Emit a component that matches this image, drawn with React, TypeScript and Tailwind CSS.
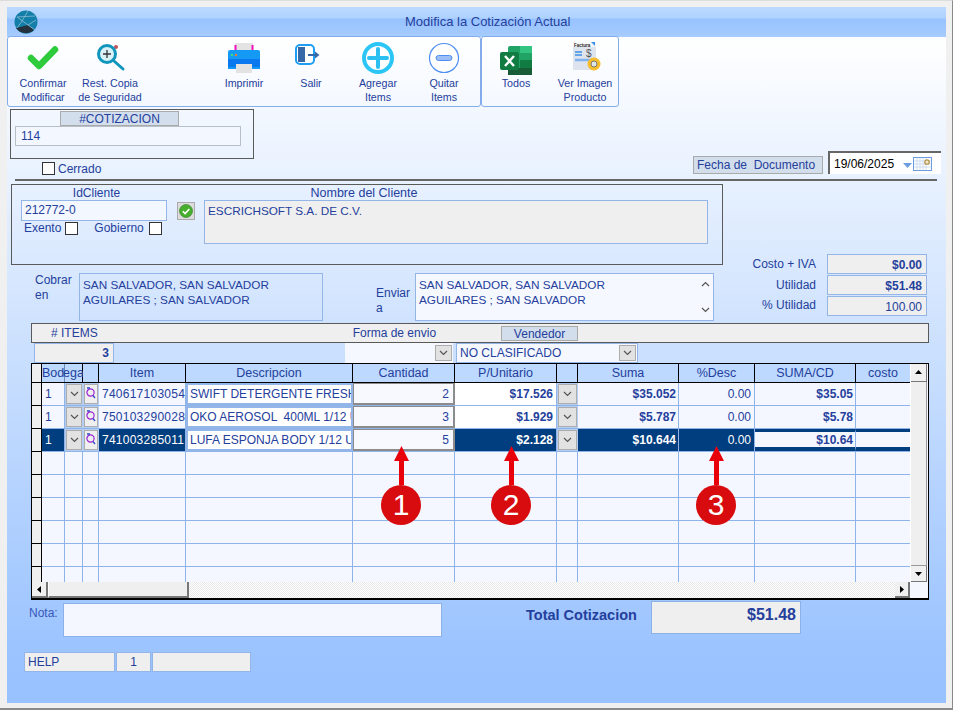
import React from 'react';

const ink = 'text-[#24409c]';

const CheckIcon = () => (
  <svg width="36" height="30" viewBox="0 0 36 30">
    <path d="M6 15l8 8L30 6.5" fill="none" stroke="#2ecb3c" strokeWidth="6.5" strokeLinecap="round" strokeLinejoin="round" />
  </svg>
);

const ZoomIcon = () => (
  <svg width="32" height="30" viewBox="0 0 32 30">
    <circle cx="22" cy="4" r="2" fill="#c0505a" />
    <circle cx="13" cy="11" r="8.5" fill="#d8f2f8" stroke="#1095bd" strokeWidth="3" />
    <path d="M9 11h8M13 7v8" stroke="#333" strokeWidth="1.3" />
    <path d="M20 18l9 8" stroke="#1095bd" strokeWidth="3" strokeLinecap="round" />
  </svg>
);

const PrinterIcon = () => (
  <svg width="34" height="32" viewBox="0 0 34 32">
    <rect x="8" y="1" width="18" height="10" fill="#e3e3e3" />
    <path d="M8.5 3v6M25.5 3v6" stroke="#f010c0" strokeWidth="2" />
    <path d="M1 10a2 2 0 012-2h28a2 2 0 012 2v17H1z" fill="#1499f5" />
    <rect x="1" y="17" width="32" height="8" fill="#0a78ee" />
    <circle cx="5" cy="13" r="1.2" fill="#3ddc84" />
    <circle cx="9" cy="13" r="1.2" fill="#f47a30" />
    <rect x="9" y="22" width="16" height="9" fill="#e3e3e3" />
  </svg>
);

const ExitIcon = () => (
  <svg width="26" height="24" viewBox="0 0 26 24" className="-ml-[6px] -mt-[6px]">
    <rect x="1" y="2" width="18" height="19" rx="4" fill="#fff" stroke="#1e9df5" strokeWidth="2" />
    <path d="M3 4h7v15H3z" fill="#3668a8" />
    <path d="M13 12h9" stroke="#3668a8" strokeWidth="2" />
    <path d="M20 8.5l4.5 3.5-4.5 3.5z" fill="#3668a8" />
  </svg>
);

const PlusIcon = () => (
  <svg width="34" height="34" viewBox="0 0 34 34">
    <circle cx="17" cy="17" r="14" fill="#fff" stroke="#2cc6f6" strokeWidth="4" />
    <path d="M8 17h18M17 8v18" stroke="#2cc0f2" strokeWidth="4" strokeLinecap="round" />
  </svg>
);

const MinusIcon = () => (
  <svg width="32" height="32" viewBox="0 0 32 32">
    <circle cx="16" cy="16" r="14.5" fill="#fff" stroke="#4c8ff0" strokeWidth="1.2" />
    <rect x="8" y="13.5" width="16" height="5" rx="2.5" fill="#9dbdf6" stroke="#4c8ff0" />
  </svg>
);

const ExcelIcon = () => (
  <svg width="32" height="30" viewBox="0 0 32 30" className="mt-[6px]">
    <rect x="8" y="0" width="24" height="29" rx="2" fill="#21a366" />
    <rect x="20" y="0" width="12" height="7" fill="#33c481" />
    <rect x="20" y="14" width="12" height="8" fill="#107c41" />
    <rect x="8" y="22" width="24" height="7" fill="#185c37" />
    <rect x="0" y="6" width="19" height="18" rx="2" fill="#107c41" />
    <path d="M5 10l9 10M14 10l-9 10" stroke="#fff" strokeWidth="2.4" />
  </svg>
);

const InvoiceIcon = () => (
  <svg width="28" height="31" viewBox="0 0 28 31" className="ml-[3px]">
    <rect x="0" y="0" width="23" height="28" fill="#dde4ee" />
    <rect x="0" y="0" width="23" height="5" fill="#f8f8f8" />
    <text x="1" y="4.5" fontSize="4.5" fontWeight="700" fill="#222" fontFamily="Liberation Sans, sans-serif">Factura</text>
    <path d="M18 0h4v4z" fill="#3a90e8" />
    <path d="M2 10h7M2 13h7" stroke="#3a90e8" strokeWidth="1.4" />
    <text x="13" y="15" fontSize="10" fill="#555" fontFamily="Liberation Sans, sans-serif">$</text>
    <path d="M2 18h17" stroke="#7fb2ee" strokeWidth="2.5" />
    <circle cx="21" cy="22" r="6.5" fill="#f7bd2c" />
    <circle cx="21" cy="22" r="3" fill="#dfe5ea" stroke="#7c7c6c" />
  </svg>
);

const Logo = () => (
  <svg width="24" height="24" viewBox="0 0 24 24">
    <circle cx="12" cy="12" r="11.5" fill="#137fa8" />
    <path d="M2 18a12 12 0 0018 2l-6-5z" fill="#243240" />
    <path d="M3 7l11 8 7 5M14 1L8 11l-5 7M3 7l18-1M14 15l8-5" stroke="#9cc4d8" strokeWidth=".7" fill="none" />
  </svg>
);

const CalendarIcon = () => (
  <svg width="30" height="15" viewBox="0 0 30 15">
    <path d="M1 7h9l-4.5 5z" fill="#6c9de0" />
    <rect x="11.5" y="1.5" width="18" height="13" fill="#fff" stroke="#6c9de0" />
    <path d="M12 5h17M12 8h17M12 11h17M15 2v12M18 2v12M21 2v12M24 2v12" stroke="#c5d6ee" strokeWidth=".8" />
    <circle cx="25" cy="6" r="2.2" fill="#f2ead0" stroke="#b3954a" strokeWidth="1.3" />
  </svg>
);

const ToolButton = ({ icon, lines, className }: { icon: React.ReactNode; lines: string[]; className: string }) => (
  <button className={`flex flex-col items-center w-[66px] shrink-0 ${className}`}>
    <span className="h-[37px] mt-px flex items-center justify-center">{icon}</span>
    {lines.map((line) => (
      <span key={line} className="text-[10.7px] leading-[14px] whitespace-nowrap">{line}</span>
    ))}
  </button>
);

const Checkbox = ({ className = '' }: { className?: string }) => (
  <span className={`block w-[13px] h-[13px] bg-white border border-[#333] ${className}`} />
);

const Chevron = ({ up = false }: { up?: boolean }) => (
  <svg width="9" height="6" viewBox="0 0 9 6" className={up ? 'rotate-180' : ''}>
    <path d="M1 1l3.5 3.5L8 1" fill="none" stroke="#555" strokeWidth="1.2" />
  </svg>
);

const ComboButton = ({ className = '' }: { className?: string }) => (
  <span className={`flex items-center justify-center bg-[#e2e2e2] border border-[#adadad] ${className}`}>
    <Chevron />
  </span>
);

const LookupIcon = () => (
  <svg width="10" height="14" viewBox="0 0 10 14">
    <circle cx="4.5" cy="5.5" r="3.6" fill="none" stroke="#9a22d8" strokeWidth="1.2" />
    <path d="M7 8.5l2 2.5M1 1h3" stroke="#3448c8" strokeWidth="1.3" />
  </svg>
);

const Triangle = ({ d }: { d: string }) => (
  <svg width="9" height="9" viewBox="0 0 9 9"><path d={d} fill="#000" /></svg>
);

const Stat = ({ label, value, bold = false, labelClass = '' }: { label: string; value: string; bold?: boolean; labelClass?: string }) => (
  <div className="flex items-center h-[20px] mb-px">
    <span className={`w-[61px] text-[12px] whitespace-nowrap flex justify-end ${labelClass}`}>{label}</span>
    <span className={`ml-[11px] w-[100px] h-[20px] bg-[#efefef] border border-[#93b5e8] text-right pr-[4px] text-[12px] leading-[20px] ${bold ? 'font-bold' : ''}`}>{value}</span>
  </div>
);

const columns = [
  { name: 'Bod', w: 'w-[23px]' },
  { name: 'ega', w: 'w-[18px]' },
  { name: '', w: 'w-[16px]' },
  { name: 'Item', w: 'w-[87px]' },
  { name: 'Descripcion', w: 'w-[167px]' },
  { name: 'Cantidad', w: 'w-[102px]' },
  { name: 'P/Unitario', w: 'w-[102px]' },
  { name: '', w: 'w-[21px]' },
  { name: 'Suma', w: 'w-[101px]' },
  { name: '%Desc', w: 'w-[76px]' },
  { name: 'SUMA/CD', w: 'w-[101px]' },
  { name: 'costo', w: 'w-[54px]' },
];

const items = [
  { code: '740617103054', desc: 'SWIFT DETERGENTE FRESH', qty: '2', price: '$17.526', sum: '$35.052', total: '$35.05' },
  { code: '750103290028', desc: 'OKO AEROSOL  400ML 1/12 U', qty: '3', price: '$1.929', sum: '$5.787', total: '$5.78' },
  { code: '741003285011', desc: 'LUFA ESPONJA BODY 1/12 UN', qty: '5', price: '$2.128', sum: '$10.644', total: '$10.64' },
];

const cell = 'h-full shrink-0 overflow-hidden whitespace-pre text-[12px]';
const line = 'border-r border-[#8fb4ea]';

const ItemRow = ({ item, selected }: { item: (typeof items)[number]; selected: boolean }) => {
  const pick = selected ? 'bg-[#003e80] text-white' : '';
  const band = selected ? 'border-t-[3px] border-b-[4px] border-t-[#003e80] border-b-[#003e80] leading-[16px]' : 'leading-[22px]';
  return (
    <div className="flex h-[23px] border-b border-[#8fb4ea]">
      <div className="w-[10px] shrink-0 bg-[#efefef] border-r border-b border-black -mb-px" />
      <div className={`${cell} ${line} leading-[22px] w-[23px] pl-[3px] ${pick}`}>1</div>
      <div className={`${cell} w-[18px] bg-[#b4cdf0] p-px`}><ComboButton className="w-full h-full" /></div>
      <div className={`${cell} w-[16px] bg-[#b4cdf0] p-px`}>
        <span className="flex items-center justify-center w-full h-full bg-[#efefef] border border-[#adadad]"><LookupIcon /></span>
      </div>
      <div className={`${cell} ${line} leading-[22px] tracking-[0.25px] w-[87px] pl-[3px] ${pick}`}>{item.code}</div>
      <div className={`${cell} w-[167px] bg-white border-2 border-[#93b5e8] pl-[2px] leading-[18px] text-[11.75px]`}>{item.desc}</div>
      <div className={`${cell} w-[102px] bg-[#f7f9ff] border border-b-2 border-r-2 border-[#8c8c8c] text-right pr-[4px] leading-[21px]`}>{item.qty}</div>
      <div className={`${cell} ${line} leading-[22px] w-[102px] text-right pr-[3px] font-bold ${selected ? pick : 'bg-white'}`}>{item.price}</div>
      <div className={`${cell} w-[21px] bg-[#b4cdf0] p-px`}><ComboButton className="w-full h-full" /></div>
      <div className={`${cell} ${line} leading-[22px] w-[101px] text-right pr-[2px] font-bold ${pick}`}>{item.sum}</div>
      <div className={`${cell} ${line} leading-[22px] w-[76px] text-right pr-[3px] ${pick}`}>0.00</div>
      <div className={`${cell} ${line} w-[101px] text-right pr-[2px] font-bold ${band}`}>{item.total}</div>
      <div className={`${cell} w-[54px] ${band}`} />
    </div>
  );
};

const EmptyRow = () => (
  <div className="flex h-[23px] border-b border-[#8fb4ea]">
    <div className="w-[10px] shrink-0 bg-[#efefef] border-r border-b border-black -mb-px" />
    {columns.map((col, i) => (
      <div key={i} className={`${col.w} h-full shrink-0 ${i === columns.length - 1 ? '' : 'border-r border-[#8fb4ea]'}`} />
    ))}
  </div>
);

const Callout = ({ n, className }: { n: string; className: string }) => (
  <div className={`absolute top-[445px] w-[40px] flex flex-col items-center ${className}`}>
    <svg width="15" height="39" viewBox="0 0 15 39" className="block">
      <path d="M7.5 0L15 15H10V39H5V15H0z" fill="#e8000b" />
    </svg>
    <div className="w-[40px] h-[40px] rounded-full bg-[#d80c0f] text-white text-[30px] leading-[40px] text-center">{n}</div>
  </div>
);

export default function App() {
  return (
    <div className={`relative w-[953px] h-[710px] overflow-hidden bg-[#f0f0f0] border-t border-[#dcdcdc] border-b-2 border-b-[#8a8a8a] border-r border-r-[#8a8a8a] pl-[7px] pt-[6px] font-['Liberation_Sans',Arial,sans-serif] ${ink}`}>
      <div className="w-[939px] h-[696px] flex flex-col bg-[linear-gradient(to_bottom,#ffffff_30px,#e6f0ff_183px,#cbe0fe_343px,#9cc4ff_640px,#97c2ff_100%)]">
        {/* title bar */}
        <div className="h-[30px] shrink-0 flex items-center pl-[7px] bg-[linear-gradient(to_bottom,#bcdaff_0,#aed2ff_11px,#98c3ff_12px,#a6ccff_100%)]">
          <Logo />
          <span className="ml-[367px] text-[13px] text-[#24409c]">Modifica la Cotización Actual</span>
        </div>

        {/* toolbar */}
        <div className="flex h-[71px] shrink-0 -mt-px">
          <div className="w-[474px] h-full flex pl-[2px] pt-[1px] border border-[#84acea] rounded-[3px]">
            <ToolButton icon={<CheckIcon />} lines={['Confirmar', 'Modificar']} className="" />
            <ToolButton icon={<ZoomIcon />} lines={['Rest. Copia', 'de Seguridad']} className="ml-px" />
            <ToolButton icon={<PrinterIcon />} lines={['Imprimir']} className="ml-[68px]" />
            <ToolButton icon={<ExitIcon />} lines={['Salir']} className="ml-px" />
            <ToolButton icon={<PlusIcon />} lines={['Agregar', 'Items']} className="ml-px" />
            <ToolButton icon={<MinusIcon />} lines={['Quitar', 'Items']} />
          </div>
          <div className="w-[138px] h-full flex pt-[1px] border border-[#84acea] rounded-[3px]">
            <ToolButton icon={<ExcelIcon />} lines={['Todos']} className="ml-px" />
            <ToolButton icon={<InvoiceIcon />} lines={['Ver Imagen', 'Producto']} className="ml-[3px]" />
          </div>
        </div>

        {/* document number and date */}
        <div className="flex h-[67px] shrink-0 mt-[2px] pl-[3px]">
          <div>
            <div className="w-[244px] h-[50px] border border-[#5a5a5a]">
              <div className="ml-[49px] mt-px w-[119px] h-[15px] bg-[#d3deed] border border-[#aaa] text-center text-[12px] leading-[14px]">#COTIZACION</div>
              <div className="ml-[4px] w-[226px] h-[20px] bg-[#f3f7ff] border border-[#b9bfc9] pl-[5px] text-[12px] leading-[19px]">114</div>
            </div>
            <div className="flex items-center h-[17px] mt-px ml-[32px]">
              <Checkbox />
              <span className="ml-[3px] text-[12px]">Cerrado</span>
            </div>
          </div>
          <div className="flex items-end self-end ml-[439px] mb-[2px]">
            <div className="w-[130px] h-[18px] bg-[#d3deed] border border-[#aaa] pl-[3px] text-[12px] leading-[16px] whitespace-pre">Fecha de  Documento</div>
            <div className="flex items-center ml-[5px] w-[113px] h-[23px] bg-white border-t-2 border-l-2 border-[#666] pl-[4px] text-[12px] text-black">
              <span className="w-[68px]">19/06/2025</span>
              <CalendarIcon />
            </div>
          </div>
        </div>
        <div className="h-[2px] w-[922px] ml-[8px] mt-[3px] shrink-0 bg-[#666]" />

        {/* client block with totals on the right */}
        <div className="flex h-[137px] shrink-0 mt-[3px]">
          <div className="w-[712px] ml-[4px] shrink-0">
            <div className="w-[712px] h-[81px] border border-[#5a5a5a] flex pl-[9px] pt-px">
              <div className="w-[146px]">
                <div className="pl-[5px] text-center text-[12px] leading-[14px]">IdCliente</div>
                <div className="h-[21px] bg-[#f3f7ff] border border-[#93b5e8] pl-[3px] text-[12px] leading-[19px]">212772-0</div>
                <div className="flex items-center mt-px h-[13px] pl-[3px] text-[12px] leading-[13px]">
                  <span>Exento</span>
                  <Checkbox className="ml-[4px]" />
                  <span className="ml-[16px]">Gobierno</span>
                  <Checkbox className="ml-[5px]" />
                </div>
              </div>
              <div className="ml-[10px] mt-[16px] w-[18px] h-[18px] flex items-center justify-center bg-[#dcdcdc] border border-[#aaa]">
                <svg width="14" height="14" viewBox="0 0 14 14">
                  <circle cx="7" cy="7" r="6.5" fill="#46b02e" stroke="#2c7a1c" strokeWidth=".6" />
                  <path d="M3.8 7.2l2.3 2.4 4.2-4.6" fill="none" stroke="#fff" strokeWidth="1.6" />
                </svg>
              </div>
              <div className="ml-[9px] w-[504px]">
                <div className="text-center text-[12.5px] leading-[14px] pr-[184px]">Nombre del Cliente</div>
                <div className="h-[44px] bg-[#efefef] border border-[#93b5e8] pl-[3px] text-[11.75px] leading-[19px]">ESCRICHSOFT S.A. DE C.V.</div>
              </div>
            </div>
            <div className="flex mt-[8px] h-[48px] text-[11.75px] leading-[15px]">
              <div className="w-[44px] ml-[24px] text-[12px]">Cobrar<br />en</div>
              <div className="w-[244px] h-[48px] border border-[#93b5e8] pl-[3px] pt-[3px]">SAN SALVADOR, SAN SALVADOR<br />AGUILARES ; SAN SALVADOR</div>
              <div className="w-[39px] ml-[53px] pt-[13px] text-[12px]">Enviar<br />a</div>
              <div className="relative w-[299px] h-[48px] bg-[#f5f8ff] border border-[#93b5e8] pl-[3px] pt-[3px]">
                SAN SALVADOR, SAN SALVADOR<br />AGUILARES ; SAN SALVADOR
                <span className="absolute right-0 top-0 bottom-0 w-[16px] flex flex-col items-center justify-between py-[7px]">
                  <Chevron up /><Chevron />
                </span>
              </div>
            </div>
          </div>
          <div className="ml-[32px] w-[172px] pt-[70px]">
            <Stat label="Costo + IVA" value="$0.00" bold />
            <Stat label="Utilidad" value="$51.48" bold />
            <Stat label="% Utilidad" value="100.00" labelClass="pb-[3px]" />
          </div>
        </div>

        {/* items / vendor bar */}
        <div className="flex items-center h-[20px] w-[898px] ml-[24px] mt-[2px] shrink-0 bg-[#efefef] border border-[#5a5a5a] text-[12px]">
          <span className="ml-[19px]">#&nbsp;ITEMS</span>
          <span className="ml-[255px]">Forma de envio</span>
          <span className="ml-[65px] w-[77px] h-[15px] bg-[#d3deed] border border-[#aaa] text-center leading-[14px]">Vendedor</span>
        </div>
        <div className="flex h-[20px] shrink-0 text-[12px]">
          <div className="ml-[27px] w-[80px] bg-[#efefef] border border-[#93b5e8] text-right pr-[4px] font-bold leading-[19px]">3</div>
          <div className="ml-[231px] w-[108px] flex justify-end bg-[#f5f8ff] p-[2px] pr-px"><ComboButton className="w-[17px] h-full" /></div>
          <div className="ml-[3px] w-[182px] flex justify-between bg-[#f5f8ff] border border-[#93b5e8] pl-[3px] pr-px py-px leading-[17px]">
            NO CLASIFICADO
            <ComboButton className="w-[17px] h-full" />
          </div>
        </div>

        {/* grid */}
        <div className="flex flex-col w-[898px] h-[237px] ml-[24px] shrink-0 border border-black border-b-2 bg-[#f4f7ff]">
          <div className="flex flex-1 min-h-0">
            <div className="w-[878px] shrink-0 flex flex-col">
              <div className="flex h-[19px] shrink-0 border-b border-black">
                <div className="w-[10px] shrink-0 bg-[#efefef] border-r border-black" />
                {columns.map((col, i) => (
                  <div key={i} className={`${col.w} shrink-0 bg-[#bdd9ff] flex justify-center text-[12.5px] leading-[18px] whitespace-nowrap ${i === 0 ? 'border-r border-[#6f8bb8]' : i === columns.length - 1 ? '' : 'border-r border-black'}`}>{col.name}</div>
                ))}
              </div>
              <div className="flex-1 min-h-0 overflow-hidden">
                {items.map((item, i) => (
                  <ItemRow key={item.code} item={item} selected={i === 2} />
                ))}
                {[0, 1, 2, 3, 4, 5].map((i) => <EmptyRow key={i} />)}
              </div>
            </div>
            <div className="w-[17px] shrink-0 flex flex-col bg-[#efefef] border-l border-white">
              <div className="h-[18px] flex items-center justify-center bg-[#f0f0f0] border-r border-b border-[#777]"><Triangle d="M4.5 2L8 6H1z" /></div>
              <div className="flex-1 border-r border-b border-[#9a9a9a]" />
              <div className="h-[16px] flex items-center justify-center bg-[#f0f0f0] border-r border-b border-[#777]"><Triangle d="M4.5 7L8 3H1z" /></div>
            </div>
          </div>
          <div className="flex h-[16px] shrink-0">
            <div className="w-[16px] flex items-center justify-center bg-[#f0f0f0] border-r-2 border-b-2 border-[#777]"><Triangle d="M2 4.5L6 1v7z" /></div>
            <div className="w-[141px] bg-[#efefef] border-r-2 border-b-2 border-[#777] border-l border-l-white" />
            <div className="w-[706px] bg-[repeating-conic-gradient(#e8e8e8_0_25%,#ffffff_0_50%)] bg-[length:2px_2px]" />
            <div className="w-[15px] flex items-center justify-center bg-[#f0f0f0] border-r-2 border-b-2 border-[#777]"><Triangle d="M7 4.5L3 1v7z" /></div>
          </div>
        </div>

        {/* note and total */}
        <div className="flex h-[37px] shrink-0 mt-px">
          <span className="ml-[22px] mt-[3px] w-[34px] text-[12px] text-[#3658b8]">Nota:</span>
          <div className="w-[379px] h-[34px] mt-[2px] bg-[#f4f7ff] border border-[#8db0e6]" />
          <span className="ml-[84px] mt-[4px] w-[125px] text-[14.5px] font-bold whitespace-nowrap">Total Cotizacion</span>
          <div className="w-[150px] h-[33px] bg-[#efefef] border border-[#8db0e6] text-right pr-[4px] text-[16px] font-bold leading-[26px]">$51.48</div>
        </div>

        {/* help strip */}
        <div className="flex h-[20px] shrink-0 mt-[14px] ml-[17px] text-[12px] leading-[18px]">
          <div className="w-[91px] bg-[#efefef] border border-[#93b5e8] pl-[3px]">HELP</div>
          <div className="w-[35px] ml-px bg-[#efefef] border border-[#93b5e8] text-center">1</div>
          <div className="w-[99px] ml-px bg-[#efefef] border border-[#93b5e8]" />
        </div>
      </div>

      <Callout n="1" className="left-[381px]" />
      <Callout n="2" className="left-[491px]" />
      <Callout n="3" className="left-[696px]" />
    </div>
  );
}
